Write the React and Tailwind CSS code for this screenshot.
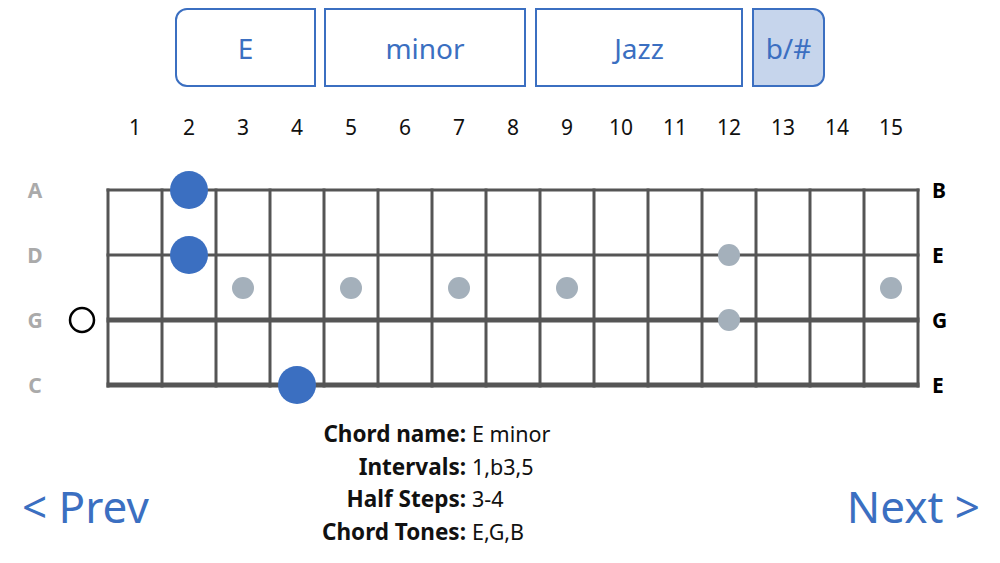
import React from "react";

const BLUE = "#3b6fc1";

const frets = Array.from({ length: 15 }, (_, i) => i + 1);
const leftStrings = ["A", "D", "G", "C"];
const rightStrings = ["B", "E", "G", "E"];

// fretboard geometry inside the svg
const GX = 38;
const CELL = 54;
const ROWS = [32, 97, 162, 227];

const Fretboard = () => {
  const right = GX + CELL * 15;
  const center = (fret) => GX + CELL * (fret - 1) + CELL / 2;
  return (
    <svg width="852" height="259" viewBox="0 0 852 259" className="overflow-visible">
      {frets.concat([0]).map((k) => (
        <line key={k} x1={GX + CELL * k} y1={ROWS[0] - 1.5} x2={GX + CELL * k} y2={ROWS[3] + 2.5} stroke="#555555" strokeWidth="3" />
      ))}
      <line x1={GX - 1.5} y1={ROWS[0]} x2={right + 1.5} y2={ROWS[0]} stroke="#555555" strokeWidth="3" />
      <line x1={GX - 1.5} y1={ROWS[1]} x2={right + 1.5} y2={ROWS[1]} stroke="#555555" strokeWidth="3" />
      <line x1={GX - 1.5} y1={ROWS[2]} x2={right + 1.5} y2={ROWS[2]} stroke="#555555" strokeWidth="5" />
      <line x1={GX - 1.5} y1={ROWS[3]} x2={right + 1.5} y2={ROWS[3]} stroke="#555555" strokeWidth="5" />

      {/* inlay markers */}
      {[3, 5, 7, 9, 15].map((f) => (
        <circle key={f} cx={center(f)} cy={130} r="11" fill="#a4b0bb" />
      ))}
      <circle cx={center(12)} cy={ROWS[1]} r="11" fill="#a4b0bb" />
      <circle cx={center(12)} cy={ROWS[2]} r="11" fill="#a4b0bb" />

      {/* open string */}
      <circle cx="12" cy={ROWS[2]} r="12" fill="none" stroke="#000" strokeWidth="2.5" />

      {/* chord notes */}
      <circle cx={center(2)} cy={ROWS[0]} r="19" fill={BLUE} />
      <circle cx={center(2)} cy={ROWS[1]} r="19" fill={BLUE} />
      <circle cx={center(4)} cy={ROWS[3]} r="19" fill={BLUE} />
    </svg>
  );
};

const info = [
  ["Chord name:", "E minor"],
  ["Intervals:", "1,b3,5"],
  ["Half Steps:", "3-4"],
  ["Chord Tones:", "E,G,B"],
];

export default function App() {
  return (
    <div className="w-[1000px] h-[563px] bg-white overflow-hidden" style={{ fontFamily: '"Noto Sans", "Open Sans", sans-serif' }}>
      <div className="flex pt-[8px] pl-[175px]">
        <div className="w-[141px] h-[79px] border-2 border-[#3b6fc1] rounded-l-[12px] flex items-center justify-center text-[28px] text-[#3b6fc1]">E</div>
        <div className="ml-[8px] w-[202px] h-[79px] border-2 border-[#3b6fc1] flex items-center justify-center text-[28px] text-[#3b6fc1]">minor</div>
        <div className="ml-[9px] w-[208px] h-[79px] border-2 border-[#3b6fc1] flex items-center justify-center text-[28px] text-[#3b6fc1]">Jazz</div>
        <div className="ml-[9px] w-[73px] h-[79px] border-2 border-[#3b6fc1] rounded-r-[12px] bg-[#c6d5ec] flex items-center justify-center text-[28px] text-[#3b6fc1]">b/#</div>
      </div>

      <div className="mt-[25px] ml-[108px] grid grid-cols-[repeat(15,54px)] h-[30px] items-center text-center text-[21px] text-[#111]">
        {frets.map((f) => (
          <div key={f}>{f}</div>
        ))}
      </div>

      <div className="mt-[16px] flex">
        <div className="w-[70px] flex flex-col">
          {leftStrings.map((s, i) => (
            <div key={i} className="h-[65px] flex items-center justify-center text-[21px] font-bold text-[#aaaaaa]">{s}</div>
          ))}
        </div>
        <Fretboard />
        <div className="pl-[10px] flex flex-col">
          {rightStrings.map((s, i) => (
            <div key={i} className="h-[65px] flex items-center text-[21px] font-bold text-black">{s}</div>
          ))}
        </div>
      </div>

      <div className="flex">
        <div className="w-[300px] pl-[22px] pt-[66px] text-[44px] leading-[44px] text-[#3b6fc1]">&lt; Prev</div>
        <div className="grid grid-cols-[166px_auto] leading-[32.5px] text-[#111]">
          {info.map(([k, v]) => (
            <React.Fragment key={k}>
              <div className="text-right font-bold text-[22.5px]">{k}</div>
              <div className="pl-[6px] text-[21.5px]">{v}</div>
            </React.Fragment>
          ))}
        </div>
        <div className="ml-auto pr-[20px] pt-[66px] text-[44px] leading-[44px] text-[#3b6fc1]">Next &gt;</div>
      </div>
    </div>
  );
}
